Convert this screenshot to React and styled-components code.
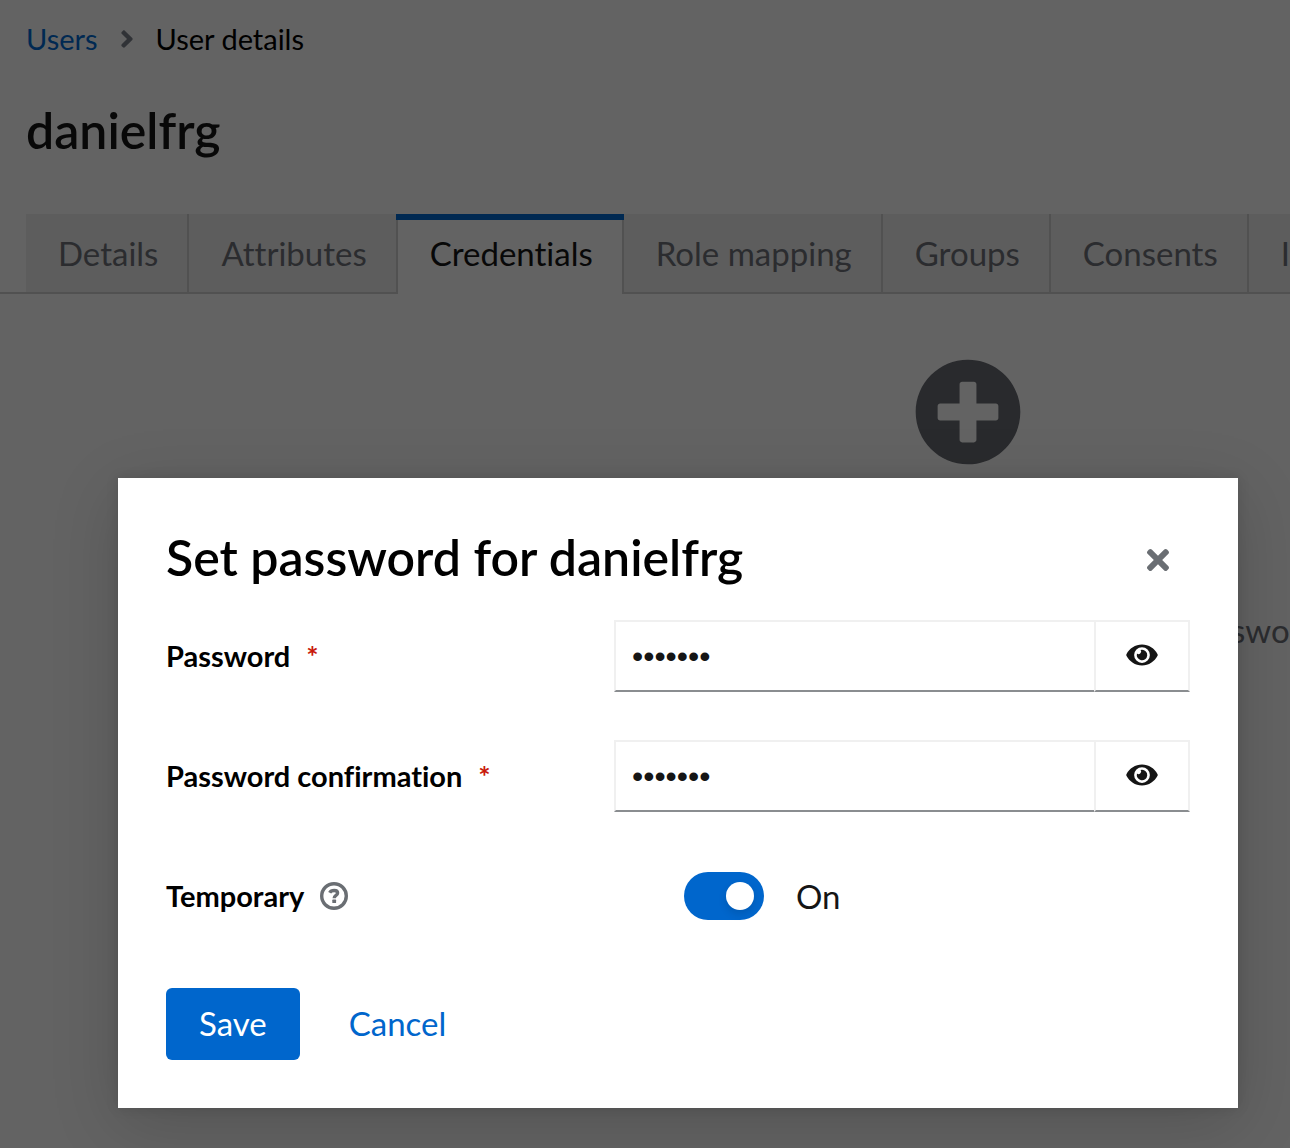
import React, { useState } from "react";
import styled, { createGlobalStyle } from "styled-components";
import { FaAngleRight, FaEye, FaPlusCircle, FaTimes } from "react-icons/fa";

const GlobalStyle = createGlobalStyle`
  *, *::before, *::after { box-sizing: border-box; }
  body { margin: 0; background: #636363; }
  button, input { font: inherit; color: inherit; }
`;

const Screen = styled.div`
  position: relative;
  min-height: 100vh;
  overflow: hidden;
  background: #636363;
  color: #080808;
  font-family: Lato, "Open Sans", sans-serif;
  font-size: 33px;
  font-variant-ligatures: none;
  line-height: 48px;
`;

const PageHeader = styled.header`
  padding: 18px 26px 0;
`;

const Breadcrumb = styled.nav`
  display: flex;
  align-items: center;
  gap: 22px;
  font-size: 29px;
  line-height: 42px;
`;

const Crumb = styled.a`
  color: #002952;
  text-decoration: none;
`;

const CurrentCrumb = styled.span`
  color: #000;
`;

const Separator = styled(FaAngleRight)`
  width: 14px;
  height: 30px;
  color: #303236;
`;

const UserName = styled.h1`
  margin: 38px 0 0;
  font-size: 50px;
  font-weight: 600;
  line-height: 64px;
`;

const TabBar = styled.div`
  display: flex;
  margin-top: 52px;
  padding-left: 26px;
  border-bottom: 2px solid #515151;
`;

const Tab = styled.button`
  position: relative;
  flex: none;
  height: ${(p) => (p.$active ? 80 : 78)}px;
  margin-bottom: ${(p) => (p.$active ? -2 : 0)}px;
  padding: 4px 29px ${(p) => (p.$active ? 6 : 4)}px 32px;
  border: 0;
  border-right: 2px solid #515151;
  background: ${(p) => (p.$active ? "#636363" : "#5d5d5d")};
  color: ${(p) => (p.$active ? "#080808" : "#2b2c2f")};
  white-space: nowrap;

  &::before {
    content: "";
    display: ${(p) => (p.$active ? "block" : "none")};
    position: absolute;
    inset: 0 -2px auto;
    height: 6px;
    background: #002952;
  }
`;

const EmptyState = styled.section`
  display: flex;
  flex-direction: column;
  align-items: center;
  width: 150vw;
  padding-top: 64px;
  color: #2b2c2f;
`;

const AddIcon = styled(FaPlusCircle)`
  width: 108px;
  height: 108px;
  color: #292a2d;
`;

const EmptyTitle = styled.h2`
  margin: 32px 0 0;
  font-size: 40px;
  line-height: 52px;
`;

const EmptyText = styled.p`
  margin: 56px 0 0;
  white-space: nowrap;
`;

const Backdrop = styled.div`
  position: absolute;
  inset: 0;
  display: flex;
  align-items: flex-end;
  padding: 40px 52px 40px 118px;
`;

const Dialog = styled.section`
  flex: 1;
  padding: 48px;
  background: #fff;
  color: #000;
  box-shadow: 0 16px 64px rgba(3, 3, 3, 0.16), 0 0 12px rgba(3, 3, 3, 0.12);
`;

const DialogHeader = styled.header`
  display: flex;
  align-items: flex-end;
  justify-content: space-between;
`;

const DialogTitle = styled.h2`
  margin: 0;
  font-size: 50px;
  font-weight: 600;
  line-height: 62px;
`;

const CloseButton = styled.button`
  display: flex;
  padding: 12px 16px;
  border: 0;
  background: none;
  color: #6a6e73;

  svg { width: 32px; height: 32px; }
`;

const Form = styled.form`
  display: grid;
  gap: 48px;
  padding-top: 32px;
`;

const Field = styled.div`
  display: grid;
  grid-template-columns: 448px 1fr;
  align-items: center;
  min-height: 72px;
`;

const LabelCell = styled.div`
  display: flex;
  align-items: center;
  gap: 16px;
`;

const Label = styled.label`
  font-size: 29px;
  font-weight: 700;
  line-height: 42px;
`;

const Required = styled.span`
  margin-left: 16px;
  color: #c9190b;
`;

const HelpButton = styled.button`
  display: flex;
  padding: 0;
  border: 0;
  background: none;
  color: #6a6e73;
`;

const InputGroup = styled.div`
  display: flex;
  height: 72px;
`;

const PasswordInput = styled.input`
  flex: 1;
  min-width: 0;
  padding: 0 16px;
  border: 2px solid #f0f0f0;
  border-right: 0;
  border-bottom-color: #8a8d90;
  border-radius: 0;
  outline: 0;
  background: #fff;
  color: #151515;

  &[type="password"] { font-family: "Liberation Sans", Arial, sans-serif; font-size: 32px; }
`;

const RevealButton = styled.button`
  display: grid;
  place-items: center;
  width: 96px;
  padding: 0 0 2px;
  border: 2px solid #f0f0f0;
  border-bottom-color: #8a8d90;
  background: #fff;
  color: #151515;

  svg { width: 32px; height: 28px; }
`;

const SwitchLabel = styled.label`
  display: flex;
  align-items: center;
  gap: 32px;
  padding-left: 70px;
  color: #151515;
`;

const Switch = styled.input`
  appearance: none;
  display: flex;
  align-items: center;
  width: 80px;
  height: 48px;
  margin: 0;
  padding: 0 10px;
  border-radius: 24px;
  background: #8a8d90;

  &::before {
    content: "";
    width: 28px;
    height: 28px;
    border-radius: 50%;
    background: #fff;
    box-shadow: 0 4px 8px rgba(3, 3, 3, 0.12);
  }

  &:checked { justify-content: flex-end; background: #06c; }
`;

const Actions = styled.div`
  display: flex;
  gap: 16px;
  padding-top: 8px;
`;

const Button = styled.button`
  height: 72px;
  padding: 0 33px 2px;
  border: 0;
  border-radius: 6px;
  background: ${(p) => (p.$primary ? "#06c" : "transparent")};
  color: ${(p) => (p.$primary ? "#fff" : "#06c")};
`;

const TABS = ["Details", "Attributes", "Credentials", "Role mapping", "Groups", "Consents", "Identity provider links"];

function HelpIcon() {
  return (
    <svg width="28" height="28" viewBox="0 0 28 28" fill="none" stroke="currentColor" aria-hidden="true">
      <circle cx="14" cy="14" r="12.3" strokeWidth="3.4" />
      <path d="M9.7 10.8C10.7 8.9 12.2 8.5 14.2 8.5C16.4 8.5 17.6 9.6 17.6 11.1C17.6 13.6 14.2 13.4 14.2 16.2" strokeWidth="3.4" />
      <rect x="12.3" y="17.6" width="3.8" height="3.4" rx="0.6" fill="currentColor" stroke="none" />
    </svg>
  );
}

function PasswordField({ id, label }) {
  const [value, setValue] = useState("secret1");
  const [shown, setShown] = useState(false);
  return (
    <Field>
      <Label htmlFor={id}>
        {label}
        <Required>*</Required>
      </Label>
      <InputGroup>
        <PasswordInput
          id={id}
          type={shown ? "text" : "password"}
          value={value}
          onChange={(e) => setValue(e.target.value)}
          required
        />
        <RevealButton type="button" aria-label={`Show ${label.toLowerCase()}`} onClick={() => setShown(!shown)}>
          <FaEye />
        </RevealButton>
      </InputGroup>
    </Field>
  );
}

export default function App() {
  const [temporary, setTemporary] = useState(true);
  return (
    <>
      <GlobalStyle />
      <Screen>
        <PageHeader>
          <Breadcrumb aria-label="Breadcrumb">
            <Crumb href="#users">Users</Crumb>
            <Separator aria-hidden="true" />
            <CurrentCrumb>User details</CurrentCrumb>
          </Breadcrumb>
          <UserName>danielfrg</UserName>
        </PageHeader>
        <TabBar role="tablist">
          {TABS.map((name) => (
            <Tab key={name} type="button" role="tab" aria-selected={name === "Credentials"} $active={name === "Credentials"}>
              {name}
            </Tab>
          ))}
        </TabBar>
        <EmptyState>
          <AddIcon aria-hidden="true" />
          <EmptyTitle>No credentials</EmptyTitle>
          <EmptyText>This user does not have any credentials. You can set password for this user.</EmptyText>
        </EmptyState>
        <Backdrop>
          <Dialog role="dialog" aria-modal="true" aria-labelledby="dialog-title">
            <DialogHeader>
              <DialogTitle id="dialog-title">Set password for danielfrg</DialogTitle>
              <CloseButton type="button" aria-label="Close">
                <FaTimes />
              </CloseButton>
            </DialogHeader>
            <Form onSubmit={(e) => e.preventDefault()}>
              <PasswordField id="password" label="Password" />
              <PasswordField id="password-confirmation" label="Password confirmation" />
              <Field>
                <LabelCell>
                  <Label htmlFor="temporary">Temporary</Label>
                  <HelpButton type="button" aria-label="Help for temporary">
                    <HelpIcon />
                  </HelpButton>
                </LabelCell>
                <SwitchLabel>
                  <Switch
                    id="temporary"
                    type="checkbox"
                    role="switch"
                    checked={temporary}
                    onChange={(e) => setTemporary(e.target.checked)}
                  />
                  {temporary ? "On" : "Off"}
                </SwitchLabel>
              </Field>
              <Actions>
                <Button type="submit" $primary>Save</Button>
                <Button type="button">Cancel</Button>
              </Actions>
            </Form>
          </Dialog>
        </Backdrop>
      </Screen>
    </>
  );
}
